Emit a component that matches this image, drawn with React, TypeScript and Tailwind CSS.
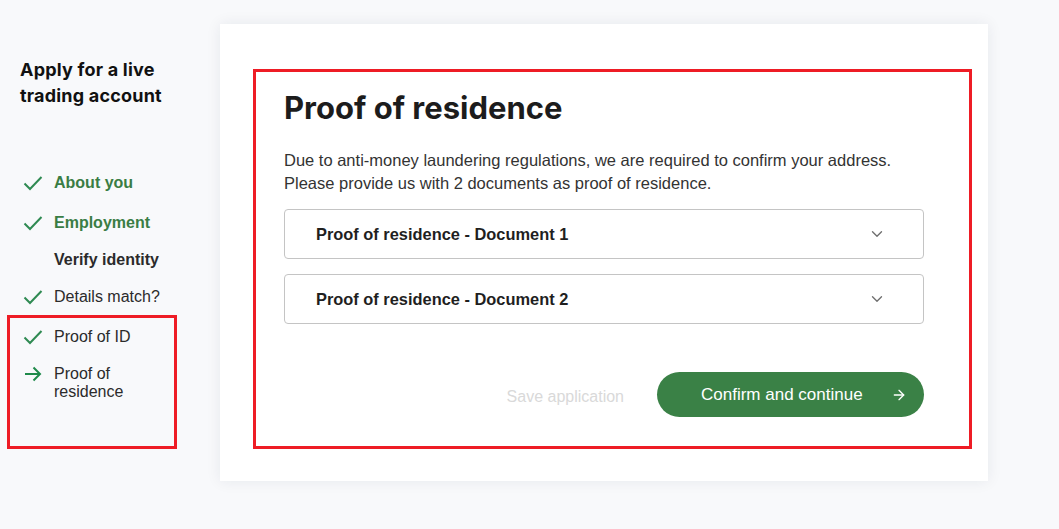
import { ArrowRight, ChevronDown } from 'lucide-react'

type Step = {
  label: string
  state: 'done' | 'current' | 'group'
  bold?: boolean
  gap: string
}

const steps: Step[] = [
  { label: 'About you', state: 'done', bold: true, gap: 'mt-[0px]' },
  { label: 'Employment', state: 'done', bold: true, gap: 'mt-[22px]' },
  { label: 'Verify identity', state: 'group', bold: true, gap: 'mt-[19px]' },
  { label: 'Details match?', state: 'done', gap: 'mt-[19px]' }
]

const boxed: Step[] = [
  { label: 'Proof of ID', state: 'done', gap: 'mt-[0px]' },
  { label: 'Proof of residence', state: 'current', gap: 'mt-[19px]' }
]

function Check() {
  return (
    <svg width="20" height="16" viewBox="0 0 20 16" fill="none">
      <path d="M1.5 8.5 L7 14 L18.5 2" stroke="#2f8a52" strokeWidth="2" />
    </svg>
  )
}

function Arrow() {
  return (
    <svg width="20" height="16" viewBox="0 0 20 16" fill="none">
      <path d="M2 8 H17 M10.5 1.5 L17 8 L10.5 14.5" stroke="#1f8a4a" strokeWidth="2" />
    </svg>
  )
}

function StepRow({ step }: { step: Step }) {
  const green = step.bold && step.state === 'done'
  return (
    <li className={`flex items-start ${step.gap}`}>
      <span className="w-[31px] shrink-0 pt-[1px]">
        {step.state === 'done' && <Check />}
        {step.state === 'current' && <Arrow />}
      </span>
      <span
        className={`text-[16px] leading-[18px] ${
          step.bold ? 'font-bold' : 'font-normal'
        } ${green ? 'text-[#3a7d44]' : 'text-[#2b2b2b]'} ${
          step.state === 'current' ? 'w-[70px]' : ''
        }`}
      >
        {step.label}
      </span>
    </li>
  )
}

function Accordion({ title }: { title: string }) {
  return (
    <button className="flex h-[50px] w-full items-center justify-between rounded-[4px] border border-[#c4c4c4] bg-white pl-[31px] pr-[37px] text-left">
      <span className="text-[16.4px] font-bold text-[#1f1f1f]">{title}</span>
      <ChevronDown size={18} strokeWidth={1.8} className="text-[#6f6f6f]" />
    </button>
  )
}

export default function App() {
  return (
    <div className="flex h-[529px] w-[1059px] bg-[#f8f9fb] font-['Liberation_Sans',Arial,sans-serif]">
      <aside className="w-[220px] shrink-0 px-[7px]">
        <h1 className="ml-[13px] mt-[57px] font-['Inter',sans-serif] text-[18px] font-bold leading-[26px] tracking-[0.2px] text-[#111]">
          Apply for a live
          <br />
          trading account
        </h1>

        <ul className="mt-[65px] pl-[16px]">
          {steps.map((s) => (
            <StepRow key={s.label} step={s} />
          ))}
        </ul>

        <div className="mt-[9px] h-[134px] w-[170px] border-[3px] border-[#ee1c25] pl-[13px] pt-[10px]">
          <ul>
            {boxed.map((s) => (
              <StepRow key={s.label} step={s} />
            ))}
          </ul>
        </div>
      </aside>

      <main className="mt-[24px] h-[457px] w-[768px] bg-white pl-[33px] pt-[45px] shadow-[0_0_14px_rgba(30,40,70,0.08)]">
        <section className="h-[380px] w-[719px] border-[3px] border-[#ee1c25] pl-[28px] pr-[45px] pt-[17px]">
          <h2 className="font-['Inter',sans-serif] text-[31px] font-bold leading-[38px] text-[#1c1c1c]">
            Proof of residence
          </h2>
          <p className="mt-[22px] text-[16.5px] leading-[23px] text-[#333]">
            Due to anti-money laundering regulations, we are required to confirm your address.
            <br />
            Please provide us with 2 documents as proof of residence.
          </p>

          <div className="mt-[14px] flex flex-col gap-[15px]">
            <Accordion title="Proof of residence - Document 1" />
            <Accordion title="Proof of residence - Document 2" />
          </div>

          <div className="mt-[48px] flex items-center justify-end gap-[33px]">
            <span className="mt-[4px] text-[16px] text-[#d9d9d9]">Save application</span>
            <button className="flex h-[45px] w-[267px] items-center justify-between rounded-full bg-[#3a8146] pl-[44px] pr-[17px] text-[17px] text-white">
              <span>Confirm and continue</span>
              <ArrowRight size={16} strokeWidth={2} />
            </button>
          </div>
        </section>
      </main>
    </div>
  )
}
